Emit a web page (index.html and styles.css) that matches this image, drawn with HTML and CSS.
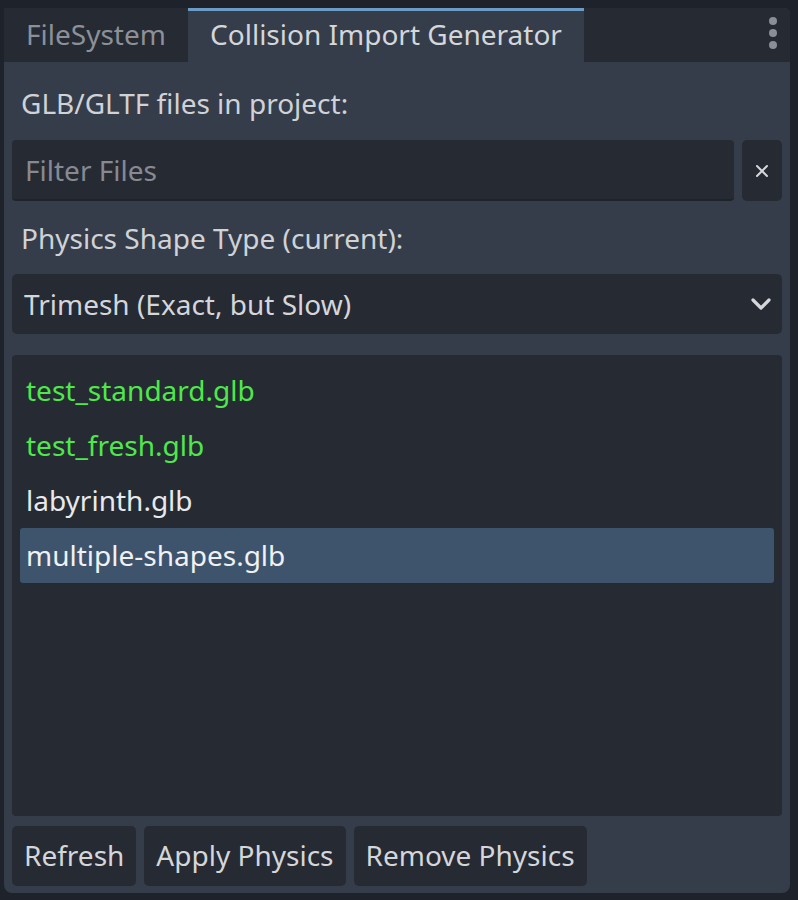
FILE: index.html
```html
<!DOCTYPE html>
<html>
<head>
<meta charset="utf-8">
<link rel="stylesheet" href="styles.css">
</head>
<body>
<div class="dock">
  <div class="tabbar">
    <div class="tab">FileSystem</div>
    <div class="tab active">Collision Import Generator</div>
    <div class="spacer"></div>
    <div class="kebab"><span></span><span></span><span></span></div>
  </div>
  <div class="panel">
    <div class="label">GLB/GLTF files in project:</div>
    <div class="filter-row">
      <div class="input">Filter Files</div>
      <div class="clear">
        <svg width="14" height="14" viewBox="0 0 14 14"><path d="M2 2 L12 12 M12 2 L2 12" stroke="#d5d7db" stroke-width="2" stroke-linecap="round"/></svg>
      </div>
    </div>
    <div class="label second">Physics Shape Type (current):</div>
    <div class="select">
      <span>Trimesh (Exact, but Slow)</span>
      <svg width="22" height="14" viewBox="0 0 22 14"><path d="M3 3 L11 11 L19 3" fill="none" stroke="#d5d7db" stroke-width="3.2" stroke-linecap="round" stroke-linejoin="round"/></svg>
    </div>
    <div class="list">
      <div class="item green">test_standard.glb</div>
      <div class="item green">test_fresh.glb</div>
      <div class="item">labyrinth.glb</div>
      <div class="item selected">multiple-shapes.glb</div>
    </div>
    <div class="buttons">
      <div class="btn">Refresh</div>
      <div class="btn">Apply Physics</div>
      <div class="btn">Remove Physics</div>
    </div>
  </div>
</div>
</body>
</html>
```

FILE: styles.css
```css
html, body {
  margin: 0;
  padding: 0;
  background: #1e222a;
  width: 798px;
  height: 900px;
  overflow: hidden;
  font-family: "Noto Sans", "Open Sans", sans-serif;
}
.dock {
  margin: 8px 8px 0 4px;
  height: 885px;
  display: flex;
  flex-direction: column;
  border-radius: 0 6px 8px 8px;
  overflow: hidden;
  background: #363d4a;
}
.tabbar {
  height: 54px;
  display: flex;
  background: #252a33;
  flex-shrink: 0;
}
.tab {
  width: 184px;
  box-sizing: border-box;
  display: flex;
  align-items: center;
  justify-content: center;
  font-size: 28px;
  color: #8c9098;
  padding-bottom: 2px;
}
.tab.active {
  width: 396px;
  background: #363d4a;
  color: #d4d6da;
  border-top: 3px solid #6a9cc6;
  padding-bottom: 5px;
}
.spacer { flex: 1; }
.kebab {
  width: 30px;
  display: flex;
  flex-direction: column;
  align-items: center;
  justify-content: center;
  gap: 4px;
  margin-right: 2px;
  padding-bottom: 4px;
}
.kebab span {
  width: 8px;
  height: 8px;
  border-radius: 50%;
  background: #8a8e96;
}
.panel {
  flex: 1;
  display: flex;
  flex-direction: column;
  padding: 8px 8px 7px 8px;
}
.label {
  font-size: 28px;
  color: #cfd2d6;
  padding-left: 9px;
  height: 72px;
  display: flex;
  align-items: center;
  margin-top: -2px;
  padding-bottom: 2px;
  box-sizing: border-box;
}
.label.second {
  height: 73px;
  margin-top: 0;
  padding-bottom: 0;
}
.filter-row {
  display: flex;
  gap: 8px;
  height: 61px;
}
.input {
  flex: 1;
  background: #262a33;
  border-radius: 4px;
  font-size: 28px;
  color: #868a92;
  display: flex;
  align-items: center;
  padding-left: 13px;
  border-bottom: 2px solid #1f232b;
  box-sizing: border-box;
}
.clear {
  width: 40px;
  background: #262a33;
  border-radius: 5px;
  display: flex;
  align-items: center;
  justify-content: center;
}
.select {
  height: 60px;
  background: #262a33;
  border-radius: 5px;
  display: flex;
  align-items: center;
  justify-content: space-between;
  padding: 0 10px 0 12px;
  font-size: 28px;
  color: #d4d6da;
}
.list {
  margin-top: 21px;
  height: 461px;
  background: #262a33;
  border-radius: 4px;
  padding: 8px;
  box-sizing: border-box;
}
.item {
  height: 55px;
  display: flex;
  align-items: center;
  padding-left: 6px;
  font-size: 28px;
  color: #e8e9eb;
  border-radius: 3px;
  padding-bottom: 2px;
  box-sizing: border-box;
}
.item.green { color: #4ee84a; }
.item.selected {
  background: #3e546c;
  color: #f0f1f2;
}
.buttons {
  margin-top: 10px;
  display: flex;
  gap: 8px;
  height: 60px;
}
.btn {
  background: #262a33;
  border-radius: 5px;
  display: flex;
  align-items: center;
  padding: 0 12px;
  font-size: 28px;
  color: #d4d6da;
  padding-bottom: 2px;
}
```
